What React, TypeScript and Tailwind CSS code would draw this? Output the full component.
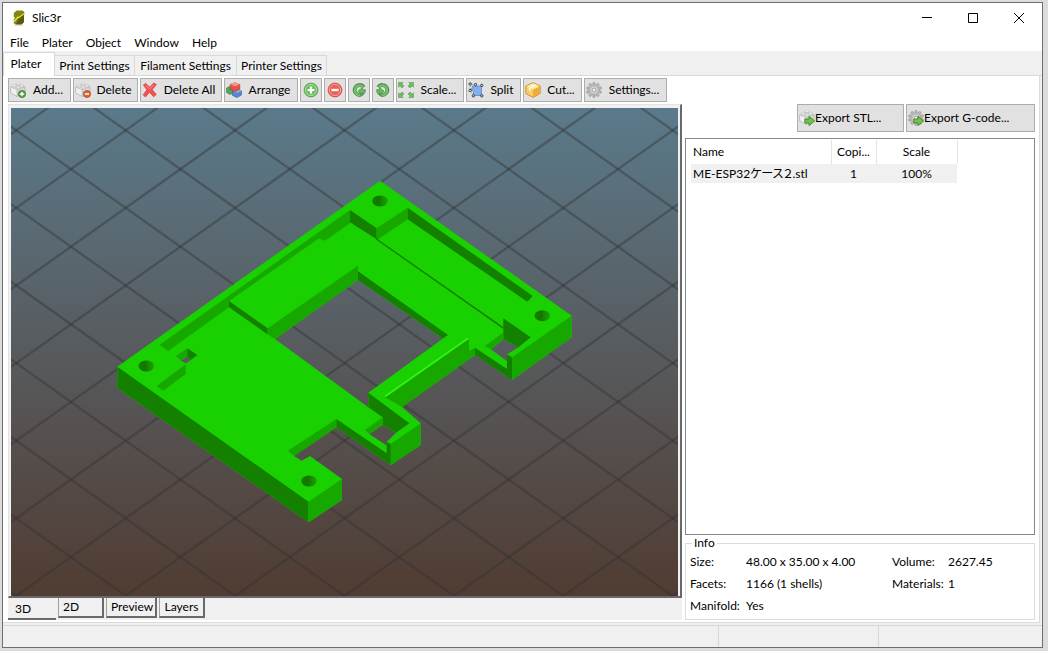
import React from "react";
import clsx from "clsx";

const LIGHT = "#19d000";
const MID = "#17a800";
const DARK = "#148000";

/* ---------- Small icons ---------- */

interface IconProps {
  children: React.ReactNode;
}

function Icon({ children }: IconProps) {
  return (
    <svg viewBox="0 0 16 16" className="size-4 shrink-0" aria-hidden="true">
      {children}
    </svg>
  );
}

function Brick() {
  return (
    <g stroke="#ababab" strokeWidth="0.5" strokeLinejoin="round">
      <path d="M0.6 5 8 2.2 14.8 4.6V10.6L7 14.4 0.6 10.8Z" fill="#f4f4f4" />
      <path d="M7 7.6 14.8 4.6V10.6L7 14.4Z" fill="#d6d6d6" />
      <path d="M0.6 5 7 7.6V14.4L0.6 10.8Z" fill="#f0f0f0" />
      <path d="M2.4 3.6v1.6c0 1 3.6 1 3.6 0V3.6M6.2 1.8v1.4c0 1 3.6 1 3.6 0V1.8M6.2 5v1.4c0 1 3.6 1 3.6 0V5M10 3.2v1.6c0 1 3.4 1 3.4 0V3.2" fill="#e4e4e4" />
      <ellipse cx="4.2" cy="3.6" rx="1.8" ry="0.9" fill="#fff" />
      <ellipse cx="8" cy="1.7" rx="1.8" ry="0.9" fill="#fff" />
      <ellipse cx="8" cy="5" rx="1.8" ry="0.9" fill="#fff" />
      <ellipse cx="11.7" cy="3.2" rx="1.7" ry="0.9" fill="#fff" />
    </g>
  );
}

function Gear() {
  const angles = [0, 36, 72, 108, 144, 180, 216, 252, 288, 324];
  return (
    <g>
      {angles.map((a) => (
        <rect key={a} x="6.9" y="0.4" width="2.2" height="3.4" rx="0.6" fill="#bdbdbd" stroke="#8f8f8f" strokeWidth="0.6" transform={`rotate(${a} 8 8)`} />
      ))}
      <circle cx="8" cy="8" r="5" fill="#cdcdcd" stroke="#999" strokeWidth="0.6" />
      <circle cx="8" cy="8" r="3.6" fill="#dedede" stroke="#b0b0b0" strokeWidth="0.6" />
      <circle cx="8" cy="8" r="1.9" fill="#f4f4f4" stroke="#8d8d8d" strokeWidth="0.8" />
    </g>
  );
}

function GreenArrow() {
  return <path d="M5.8 9H10V6.2L15.6 11 10 15.6V13H5.8Z" fill="#73c04c" stroke="#3b8a25" strokeWidth="0.9" strokeLinejoin="round" />;
}

function BrickAddIcon() {
  return (
    <Icon>
      <Brick />
      <circle cx="12" cy="12" r="3.5" fill="#55a63a" stroke="#2f7a1c" strokeWidth="0.8" />
      <path d="M12 9.8v4.4M9.8 12h4.4" stroke="#fff" strokeWidth="1.4" />
    </Icon>
  );
}

function BrickDeleteIcon() {
  return (
    <Icon>
      <Brick />
      <circle cx="12" cy="12" r="3.5" fill="#e0662c" stroke="#b0430f" strokeWidth="0.8" />
      <path d="M9.8 12h4.4" stroke="#fff" strokeWidth="1.5" />
    </Icon>
  );
}

function BrickGoIcon() {
  return (
    <Icon>
      <Brick />
      <GreenArrow />
    </Icon>
  );
}

function GearGoIcon() {
  return (
    <Icon>
      <Gear />
      <GreenArrow />
    </Icon>
  );
}

function GearIcon() {
  return (
    <Icon>
      <Gear />
    </Icon>
  );
}

function CrossIcon() {
  return (
    <Icon>
      <path d="M1.4 3 3.8 1.4 7.6 5.2 11.8 1 14.4 2.6 10.2 7.6 14.2 12.4 11.6 14.8 7.6 10.2 3.4 15 1.2 12.8 5 7.8Z" fill="#f25252" stroke="#d8302e" strokeWidth="0.7" strokeLinejoin="round" />
      <path d="M3.4 3 7.6 7 11.8 2.6" fill="none" stroke="#ff8f8a" strokeWidth="1" />
    </Icon>
  );
}

function BricksIcon() {
  return (
    <Icon>
      <path d="M0.6 6 3.5 4.5 7 6.5V11L4 12.4 0.6 10.6Z" fill="#4fa85c" stroke="#2f7d3d" strokeWidth="0.6" />
      <path d="M6.4 9 11 7.4 15.5 9V13L11 15.6 6.4 13.4Z" fill="#5688cf" stroke="#2f5fa8" strokeWidth="0.6" />
      <path d="M6.4 9 11 10.8 15.5 9 11 7.4Z" fill="#8db4e8" />
      <path d="M4.2 2.4 9 0.8 13.8 2.6V7.2L9 9.6 4.2 7.4Z" fill="#e05348" stroke="#b03028" strokeWidth="0.6" />
      <path d="M4.2 2.4 9 4.4 13.8 2.6 9 0.8Z" fill="#f38a80" />
      <ellipse cx="7.4" cy="1.8" rx="1.5" ry="0.8" fill="#f7a39b" />
      <ellipse cx="10.6" cy="2" rx="1.5" ry="0.8" fill="#f7a39b" />
    </Icon>
  );
}

function PlusIcon() {
  return (
    <Icon>
      <circle cx="8" cy="8" r="6.9" fill="#62b557" stroke="#4a9a42" strokeWidth="0.8" />
      <circle cx="8" cy="8" r="5.7" fill="#70c165" stroke="#b5e0ae" strokeWidth="0.9" />
      <path d="M8 4.6v6.8M4.6 8h6.8" stroke="#fff" strokeWidth="2.2" />
    </Icon>
  );
}

function MinusIcon() {
  return (
    <Icon>
      <circle cx="8" cy="8" r="6.9" fill="#e65349" stroke="#cf3f36" strokeWidth="0.8" />
      <circle cx="8" cy="8" r="5.7" fill="#ea6157" stroke="#f7b0aa" strokeWidth="0.9" />
      <path d="M4.4 8h7.2" stroke="#fff" strokeWidth="2.4" />
    </Icon>
  );
}

function RotateShape() {
  return (
    <g strokeLinejoin="round">
      <path d="M12.8 5.2A5 5 0 1 0 9 13" fill="none" stroke="#479044" strokeWidth="3.8" />
      <path d="M7 9.2 11.6 5.4V7.8H14.4C14.4 11 12.4 13.8 9 14.4V11.8C10.4 11.6 11.2 11.2 11.6 10.6V12.8Z" fill="#6fb768" stroke="#479044" strokeWidth="0.8" />
      <path d="M12.4 5.2A4.800 4.800 0 1 0 9 13" fill="none" stroke="#74bd6c" strokeWidth="2.4" />
    </g>
  );
}

function RotateLeftIcon() {
  return (
    <Icon>
      <RotateShape />
    </Icon>
  );
}

function RotateRightIcon() {
  return (
    <Icon>
      <g transform="translate(16 0) scale(-1 1)">
        <RotateShape />
      </g>
    </Icon>
  );
}

function ScaleIcon() {
  const arrow = "M0.5 0.5H5.2L3.9 1.9 6 4 4 6 1.9 3.9 0.5 5.2Z";
  return (
    <Icon>
      {[0, 90, 180, 270].map((a) => (
        <path key={a} d={arrow} fill="#6cbb5f" stroke="#4c9a45" strokeWidth="0.5" transform={`rotate(${a} 8 8)`} />
      ))}
    </Icon>
  );
}

function SplitIcon() {
  const nodes = [
    [2.2, 2],
    [7.5, 2.6],
    [13.8, 3.4],
    [2.2, 8.5],
    [5.4, 13.8],
    [13.8, 13.8],
  ];
  return (
    <Icon>
      <path d="M4.5 4H13.5V13.5H5.4V9L3.5 8Z" fill="#84aeee" stroke="#5a86cf" strokeWidth="0.8" />
      <path d="M2.2 2 7.5 2.6M2.2 2V8.5L5.4 13.8" fill="none" stroke="#777" strokeWidth="0.7" strokeDasharray="1 1" />
      {nodes.map(([x, y]) => (
        <circle key={`${x}-${y}`} cx={x} cy={y} r="1.2" fill="#ddd" stroke="#2d2d2d" strokeWidth="0.9" />
      ))}
    </Icon>
  );
}

function PackageIcon() {
  return (
    <Icon>
      <path d="M8 0.7 15.2 4V11.5L8 15.4 0.8 11.5V4Z" fill="#f8cd62" stroke="#cf8a1e" strokeWidth="0.9" strokeLinejoin="round" />
      <path d="M8 1.2 14.6 4.2 8 7.6 1.4 4.2Z" fill="#fdeab2" />
      <path d="M8 7.6 14.7 4.4V11.2L8 14.8Z" fill="#efae3a" />
      <path d="M10.4 2.4 3.800 5.500V8.200L5.600 9V6.400L12 3.200Z" fill="#fff7dc" />
    </Icon>
  );
}

function AppLogo() {
  return (
    <svg viewBox="0 0 12 16" className="h-4 w-3 shrink-0" aria-hidden="true">
      <path d="M3.6 0.5H9.5L11.3 2V5L9.5 6.5 11 8V12L8.5 14.5H2L0.8 13V9.5L2 8 0.8 6.5V3Z" fill="#85831a" />
      <path d="M6 7.5 11 4.5V12L8.5 14.5H3Z" fill="#5c5a0c" />
      <path d="M1.2 11.5 5 7 6 7.6 11 3.6" fill="none" stroke="#f0ee30" strokeWidth="1.2" />
      <path d="M1.5 15.3H10.5" stroke="#ddd" strokeWidth="1" />
    </svg>
  );
}

/* ---------- 3D viewport ---------- */

const STEP_X = 109.4;
const STEP_Y = 77.6;

// Every polygon of the model, painted back to front
const FACES: { fill: string; points: string }[] = [
  // outer walls
  { fill: DARK, points: "117.3,366.7 308.5,501.7 308.5,522.3 117.3,388" },
  { fill: MID, points: "308.5,501.7 342,479 342,500 308.5,522.3" },
  { fill: MID, points: "512,357.3 571.7,315.7 571.7,337.3 512,380" },
  { fill: DARK, points: "475,347.7 507,369 507,354.3 512,357.3 512,380 475,355" },
  // long left groove
  { fill: MID, points: "350,210 350,223.3 325,240.7 319,238.3 229,301 229,307.3 168.3,351 159.3,345" },
  { fill: DARK, points: "229,301 267.7,328.3 267.7,334.5 229,307.3" },
  // inner window walls
  { fill: MID, points: "267.7,328.3 358,265.7 358,280 275,339 267.7,334.5" },
  { fill: DARK, points: "358,271.3 448,335 443,338.6 358,280" },
  // top corner block
  { fill: DARK, points: "350,210 376.7,228.3 376.7,239.3 350,222.3" },
  { fill: MID, points: "376.7,228.3 407.7,207.7 407.7,219.3 378,239.3 376.7,239.3" },
  { fill: DARK, points: "407.7,207.7 532.7,296 527.3,301.7 407.7,219.3" },
  { fill: DARK, points: "376,238 503.3,327 503.3,329 376,239.6" },
  // right pocket
  { fill: DARK, points: "503.3,318.3 530.7,337.3 518.5,347.3 503.3,339" },
  { fill: MID, points: "485,346 503.3,332.5 503.3,339.3 491,349.5" },
  // rail between the two openings
  { fill: MID, points: "384.3,396.7 469,336.7 469,351 475,347.7 475,355 402,407" },
  // lower pocket
  { fill: DARK, points: "368.3,392.7 409.3,423.3 396,432.7 382.7,425 382.7,417.3 368.3,407.3" },
  { fill: MID, points: "365,430 382.7,417.3 382.7,425 369.3,434" },
  { fill: MID, points: "390.7,444 420.7,423.3 420.7,445 390.7,465" },
  { fill: DARK, points: "336.3,419 386.7,453.3 386.7,441.7 390.7,444 390.7,465 336.3,427.3" },
  { fill: MID, points: "288,450.7 336.3,419 336.3,427.3 294,456" },
  // left bracket and its slot
  { fill: MID, points: "156.7,386 185.7,364.3 185.7,374 163.3,390.7" },
  { fill: MID, points: "176,356 187.3,348.3 187.3,356.7 181,360.7" },
  { fill: DARK, points: "187.3,348.3 197.3,355 191.7,359.3 187.3,356.7" },
];

const SILHOUETTE =
  "M117.3 366.7 380 180.7 571.7 315.7V337.3L512 380 475 355 402 407 420.7 423.3V445L390.7 465 336.3 427.3 294 456 301.7 460.7 310 456 342 479V500L308.5 522.3 117.3 388Z" +
  "M275 339 358 280 443 338.6 368.3 392.7V407.3Z" +
  "M369.3 434 382.7 425 396 432.7 386.7 441.7V445.5Z" +
  "M491 349.5 503.3 339.3 518.5 347.3 507 354.3V361Z" +
  "M181 360.7 187.3 356.7 191.7 359.3 186 363.3Z";

const SCREW_HOLES = [
  [146.3, 366],
  [380, 201],
  [542.3, 315.7],
  [309, 481],
];

function GridLines() {
  const originX = 16.3;
  const originY = 130.3;
  const lines = [];
  for (let i = -12; i < 16; i++) {
    const x = originX + i * STEP_X;
    lines.push(
      <line key={`down${i}`} x1={x - STEP_X} y1={originY - STEP_Y} x2={x + STEP_X * 8} y2={originY + STEP_Y * 8} />,
      <line key={`up${i}`} x1={x + STEP_X} y1={originY - STEP_Y} x2={x - STEP_X * 8} y2={originY + STEP_Y * 8} />
    );
  }
  return (
    <g stroke="#333333" strokeOpacity="0.42" strokeWidth="2.3">
      {lines}
    </g>
  );
}

function Viewport() {
  return (
    <svg
      viewBox="11 108 667 488"
      preserveAspectRatio="xMidYMid slice"
      className="h-0 min-h-0 w-full flex-1 bg-linear-to-b from-[#5a7a8b] to-[#503c32]"
      role="img"
      aria-label="3D view of the plate"
    >
      <defs>
        <linearGradient id="hole">
          <stop offset="0" stopColor="#138200" />
          <stop offset="0.4" stopColor="#137400" />
          <stop offset="1" stopColor="#18a800" />
        </linearGradient>
      </defs>
      <GridLines />
      <path d={SILHOUETTE} fill={LIGHT} fillRule="evenodd" />
      {FACES.map((face) => (
        <polygon key={face.points} points={face.points} fill={face.fill} />
      ))}
      <path d="M385 396.5 468.5 338" stroke="#2ff512" strokeWidth="2" />
      {SCREW_HOLES.map(([cx, cy]) => (
        <ellipse key={cx} cx={cx} cy={cy} rx="7.8" ry="5.5" fill="url(#hole)" />
      ))}
    </svg>
  );
}

/* ---------- Window parts ---------- */

const TOOLS = [
  { label: "Add...", icon: <BrickAddIcon />, width: "w-[63px]" },
  { label: "Delete", icon: <BrickDeleteIcon />, width: "w-[65px]" },
  { label: "Delete All", icon: <CrossIcon />, width: "w-[82px]" },
  { label: "Arrange", icon: <BricksIcon />, width: "w-[74px]" },
  { title: "More copies", icon: <PlusIcon />, width: "w-[22px]" },
  { title: "Fewer copies", icon: <MinusIcon />, width: "w-[22px]" },
  { title: "Rotate left", icon: <RotateLeftIcon />, width: "w-[22px]" },
  { title: "Rotate right", icon: <RotateRightIcon />, width: "w-[22px]" },
  { label: "Scale...", icon: <ScaleIcon />, width: "w-[68px]" },
  { label: "Split", icon: <SplitIcon />, width: "w-[55px]" },
  { label: "Cut...", icon: <PackageIcon />, width: "w-[59px]" },
  { label: "Settings...", icon: <GearIcon />, width: "w-[83px]" },
];

function TitleBar() {
  return (
    <header className="flex h-[30px] shrink-0 items-center bg-white pl-[10px]">
      <AppLogo />
      <h1 className="ml-[7px] flex-1">Slic3r</h1>
      <button type="button" aria-label="Minimize" className="flex h-full w-[46px] items-center justify-center">
        <svg viewBox="0 0 10 10" className="size-[10px]">
          <path d="M0 4.5H10" stroke="#000" />
        </svg>
      </button>
      <button type="button" aria-label="Maximize" className="flex h-full w-[46px] items-center justify-center">
        <svg viewBox="0 0 10 10" className="size-[10px]">
          <path d="M0.5 0.5H9.5V9.5H0.5Z" fill="none" stroke="#000" />
        </svg>
      </button>
      <button type="button" aria-label="Close" className="flex h-full w-[46px] items-center justify-center">
        <svg viewBox="0 0 10 10" className="size-[10px]">
          <path d="M0 0 10 10M10 0 0 10" stroke="#000" />
        </svg>
      </button>
    </header>
  );
}

function MainTabs() {
  return (
    <div role="tablist" className="flex h-[25px] shrink-0 items-end bg-[#f0f0f0]">
      <button type="button" role="tab" aria-selected="true" className="h-[24px] w-[52px] border border-b-0 border-[#d9d9d9] bg-white pr-[6px] pb-[2px]">
        Plater
      </button>
      {[
        { label: "Print Settings", width: "w-[80px]" },
        { label: "Filament Settings", width: "w-[102px]" },
        { label: "Printer Settings", width: "w-[90px]" },
      ].map((tab) => (
        <button
          key={tab.label}
          type="button"
          role="tab"
          aria-selected="false"
          className={clsx("h-[21px] border-t border-r border-b border-[#d9d9d9] whitespace-nowrap", tab.width)}
        >
          {tab.label}
        </button>
      ))}
      <div className="h-px flex-1 bg-[#d9d9d9]" />
    </div>
  );
}

function Toolbar() {
  return (
    <div role="toolbar" className="flex gap-[2px]">
      {TOOLS.map((tool) => (
        <button
          key={tool.label ?? tool.title}
          type="button"
          aria-label={tool.label ?? tool.title}
          className={clsx("flex h-6 items-center border border-[#adadad] bg-[#e1e1e1]", tool.label ? "pl-px" : "justify-center", tool.width)}
        >
          {tool.icon}
          {tool.label && <span className="flex-1 text-center whitespace-nowrap">{tool.label}</span>}
        </button>
      ))}
    </div>
  );
}

function ViewTabs() {
  return (
    <div role="tablist" className="flex h-[22px] shrink-0 items-start gap-[2px]">
      <button type="button" role="tab" aria-selected="true" className="h-[22px] w-[48px] border-b-2 border-[#696969] pt-[2px] pl-[7px] text-left">
        3D
      </button>
      {[
        { label: "2D", width: "w-[46px] text-left" },
        { label: "Preview", width: "w-[51px]" },
        { label: "Layers", width: "w-[46px]" },
      ].map((tab) => (
        <button
          key={tab.label}
          type="button"
          role="tab"
          aria-selected="false"
          className={clsx("h-5 border-r-2 border-b-2 border-l border-r-[#696969] border-b-[#696969] border-l-[#a0a0a0] px-1", tab.width)}
        >
          {tab.label}
        </button>
      ))}
    </div>
  );
}

function ObjectList() {
  return (
    <div className="mt-[6px] min-h-0 flex-1 border border-[#828790] bg-white px-[5px] pt-px">
      <table className="w-[266px] table-fixed border-collapse">
        <thead>
          <tr className="h-[24px]">
            <th className="w-[140px] border-r border-[#e5e5e5] pl-[2px] text-left font-normal">Name</th>
            <th className="w-[45px] border-r border-[#e5e5e5] font-normal">Copi...</th>
            <th className="w-[81px] border-r border-[#e5e5e5] font-normal">Scale</th>
          </tr>
        </thead>
        <tbody>
          <tr className="h-[19px] bg-[#f0f0f0]">
            <td className="pl-[2px] whitespace-nowrap [font-feature-settings:'palt']">ME-ESP32ケース２.stl</td>
            <td className="text-center">1</td>
            <td className="text-center">100%</td>
          </tr>
        </tbody>
      </table>
    </div>
  );
}

function InfoBox() {
  return (
    <fieldset className="h-[85px] shrink-0 border border-[#dcdcdc] pl-1">
      <legend className="ml-[2px] px-[2px] leading-4">Info</legend>
      <dl className="grid grid-cols-[56px_146px_56px_1fr] leading-[22px] whitespace-nowrap">
        <dt>Size:</dt>
        <dd>48.00 x 35.00 x 4.00</dd>
        <dt>Volume:</dt>
        <dd>2627.45</dd>
        <dt>Facets:</dt>
        <dd>1166 (1 shells)</dd>
        <dt>Materials:</dt>
        <dd>1</dd>
        <dt>Manifold:</dt>
        <dd>Yes</dd>
      </dl>
    </fieldset>
  );
}

export default function App() {
  return (
    <div className="h-screen bg-[#dcdcdc] pt-[2px] pr-[5px] pb-[3px] pl-[2px] font-[Lato,'Noto_Sans_CJK_JP',sans-serif] text-[12px] leading-4 text-black">
      <div className="flex h-full flex-col border border-[#6e6e6e] bg-[#f0f0f0]">
        <TitleBar />

        {/* Menu */}
        <nav className="flex h-[18px] shrink-0 items-center gap-[13px] bg-white pt-[2px] pl-[7px]">
          {["File", "Plater", "Object", "Window", "Help"].map((item) => (
            <button key={item} type="button">
              {item}
            </button>
          ))}
        </nav>

        <MainTabs />

        {/* Plater page */}
        <main className="mr-[2px] flex min-h-0 flex-1 flex-col border-r border-b border-[#dcdcdc] bg-white pt-[2px] pr-1 pb-[2px] pl-[5px]">
          <Toolbar />
          <div className="mt-[2px] flex min-h-0 flex-1 gap-[3px]">
            <section className="flex min-w-0 flex-1 flex-col bg-[#f0f0f0]">
              <div className="flex min-h-0 flex-1 flex-col border-t border-r-2 border-b-2 border-l border-t-[#e3e3e3] border-r-[#696969] border-b-[#696969] border-l-[#e3e3e3] pt-[3px] pr-[2px] pl-[2px]">
                <Viewport />
              </div>
              <ViewTabs />
            </section>

            <aside className="flex w-[350px] shrink-0 flex-col">
              <div className="flex justify-end gap-[2px]">
                <button type="button" className="flex h-7 w-[107px] items-center border border-[#adadad] bg-[#e1e1e1] pl-[1px]">
                  <BrickGoIcon />
                  Export STL...
                </button>
                <button type="button" className="flex h-7 w-[129px] items-center border border-[#adadad] bg-[#e1e1e1] pl-[1px]">
                  <GearGoIcon />
                  Export G-code...
                </button>
              </div>
              <ObjectList />
              <InfoBox />
            </aside>
          </div>
        </main>

        {/* Status bar */}
        <footer className="mt-[2px] flex h-[22px] shrink-0 border-t border-[#d7d7d7]">
          <div className="flex-1 border-r border-[#d7d7d7]" />
          <div className="w-[160px] border-r border-[#d7d7d7]" />
          <div className="w-[163px]" />
        </footer>
      </div>
    </div>
  );
}
